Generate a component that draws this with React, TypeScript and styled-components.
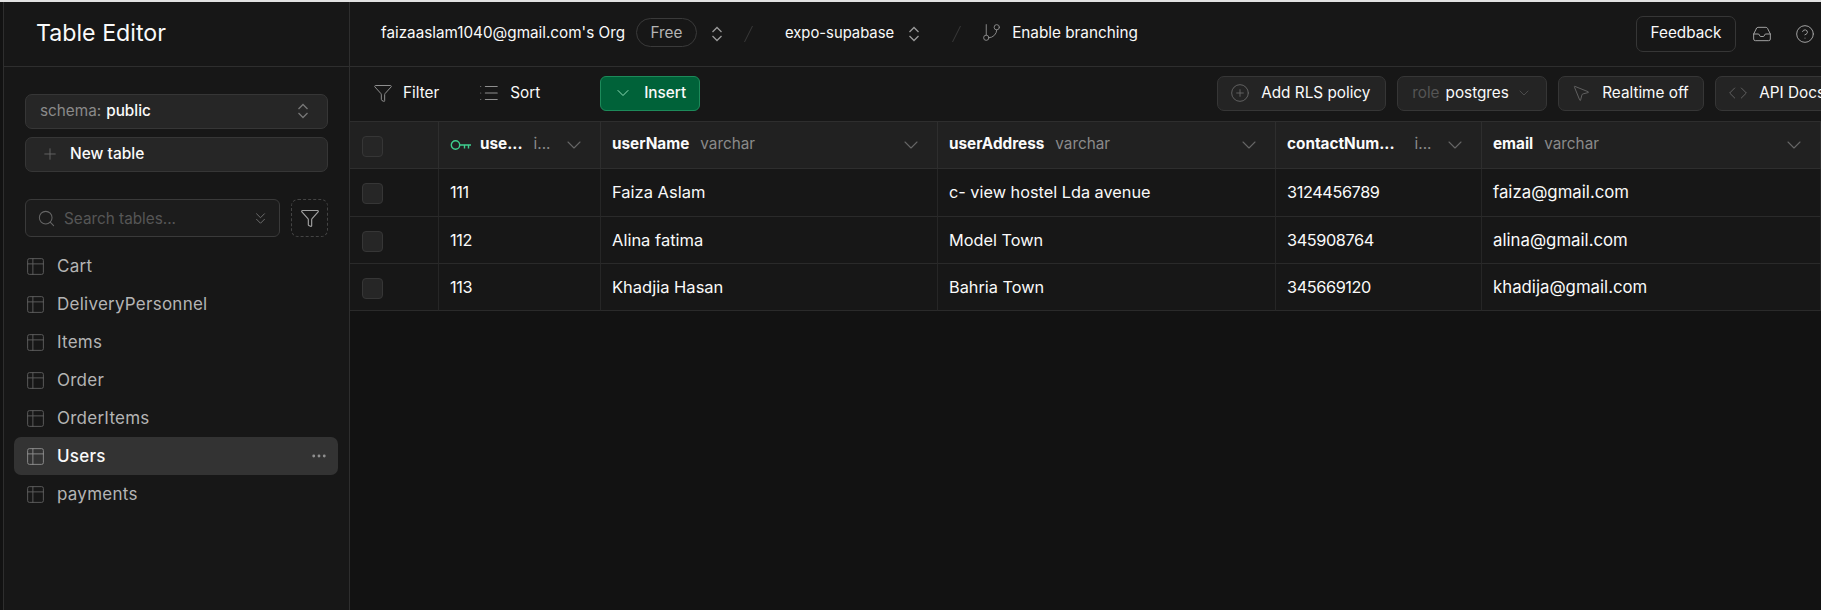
import React from "react";
import styled, { createGlobalStyle } from "styled-components";
import {
  ChevronDown,
  ChevronsDown,
  CircleHelp,
  CirclePlus,
  Code,
  Filter as FilterIcon,
  GitBranch,
  Inbox,
  List,
  MoreHorizontal,
  MousePointer2,
  Plus,
  Search,
  Table2,
} from "lucide-react";

const GlobalStyle = createGlobalStyle`
  html, body {
    margin: 0;
    padding: 0;
    background: #121212;
  }
  * {
    box-sizing: border-box;
  }
`;

const tables = ["Cart", "DeliveryPersonnel", "Items", "Order", "OrderItems", "Users", "payments"];

const rows = [
  ["111", "Faiza Aslam", "c- view hostel Lda avenue", "3124456789", "faiza@gmail.com"],
  ["112", "Alina fatima", "Model Town", "345908764", "alina@gmail.com"],
  ["113", "Khadjia Hasan", "Bahria Town", "345669120", "khadija@gmail.com"],
];

// the columns do not all run the same width in the shot
const cellSizes = [16.3, 16.5, 16.3, 16.3, 16.8];

const UpDown = ({ color = "#9a9a9a" }: { color?: string }) => (
  <svg width="12" height="16" viewBox="0 0 12 16" fill="none" stroke={color} strokeWidth="1.3">
    <path d="M1.5 6l4.5-4.5L10.500 6M1.500 10l4.500 4.500 4.500-4.500" />
  </svg>
);

const KeyGlyph = () => (
  <svg width="22" height="12" viewBox="0 0 22 12" fill="none" stroke="#3ecf8e" strokeWidth="1.4">
    <circle cx="5.5" cy="6" r="4.2" />
    <path d="M9.7 6H21M14.500 6v3.500M18.500 6v3.500" />
  </svg>
);

const SlashGlyph = () => (
  <svg width="9" height="16" viewBox="0 0 9 16" fill="none" stroke="#3a3a3a" strokeWidth="1">
    <path d="M8.500 0L.500 16" />
  </svg>
);

const App = () => {
  return (
    <Page>
      <GlobalStyle />
      <TopStrip />
      <Body>
        <Sidebar>
          <SideHead>Table Editor</SideHead>
          <SideContent>
            <SchemaButton>
              <Muted>schema:</Muted>
              <strong>public</strong>
              <PushRight>
                <UpDown color="#777" />
              </PushRight>
            </SchemaButton>
            <NewTable>
              <Plus size={18} color="#666" strokeWidth={1.2} />
              New table
            </NewTable>
            <SearchRow>
              <SearchBox>
                <Search size={19} color="#666" strokeWidth={1.3} />
                <span>Search tables...</span>
                <PushRight>
                  <ChevronsDown size={19} color="#707070" strokeWidth={1.2} />
                </PushRight>
              </SearchBox>
              <DashedButton>
                <FilterIcon size={20} color="#a0a0a0" strokeWidth={1.4} />
              </DashedButton>
            </SearchRow>
          </SideContent>
          <TableList>
            {tables.map((name) => (
              <TableItem key={name} $active={name === "Users"}>
                <Table2 size={21} color={name === "Users" ? "#8a8a8a" : "#5c5c5c"} strokeWidth={1.1} />
                <TableName>{name}</TableName>
                {name === "Users" && (
                  <PushRight>
                    <MoreHorizontal size={18} color="#8f8f8f" strokeWidth={1.8} />
                  </PushRight>
                )}
              </TableItem>
            ))}
          </TableList>
        </Sidebar>
        <Main>
          <TopBar>
            <Crumb $size={15.25}>faizaaslam1040@gmail.com's Org</Crumb>
            <PlanPill>Free</PlanPill>
            <CrumbChevron>
              <UpDown />
            </CrumbChevron>
            <Slash $before={21} $after={32}>
              <SlashGlyph />
            </Slash>
            <Crumb $size={14.8}>expo-supabase</Crumb>
            <CrumbChevron>
              <UpDown />
            </CrumbChevron>
            <Slash $before={32} $after={20}>
              <SlashGlyph />
            </Slash>
            <BranchLink>
              <GitBranch size={21} color="#8a8a8a" strokeWidth={1.1} />
              Enable branching
            </BranchLink>
            <TopRight>
              <FeedbackButton>Feedback</FeedbackButton>
              <Inbox size={20} color="#a0a0a0" strokeWidth={1.2} />
              <HelpWrap>
                <CircleHelp size={20} color="#a0a0a0" strokeWidth={1.2} />
              </HelpWrap>
            </TopRight>
          </TopBar>
          <Toolbar>
            <ToolItem>
              <FilterIcon size={20} color="#8f8f8f" strokeWidth={1.2} />
              Filter
            </ToolItem>
            <ToolItem>
              <List size={22} color="#8f8f8f" strokeWidth={1.1} />
              Sort
            </ToolItem>
            <ToolDivider />
            <InsertButton>
              <ChevronDown size={20} color="#8fdcb6" strokeWidth={1.2} />
              Insert
            </InsertButton>
            <ToolRight>
              <ToolButton $width={169}>
                <CirclePlus size={20} color="#666" strokeWidth={1.1} />
                Add RLS policy
              </ToolButton>
              <ToolButton $width={150} $pad={14}>
                <RoleLabel>role</RoleLabel>
                postgres
                <RoleChevron>
                  <ChevronDown size={16} color="#555" strokeWidth={1.2} />
                </RoleChevron>
              </ToolButton>
              <ToolButton $width={146}>
                <MousePointer2 size={20} color="#666" strokeWidth={1.1} />
                Realtime off
              </ToolButton>
              <ToolButton $width={150}>
                <Code size={20} color="#666" strokeWidth={1.1} />
                API Docs
              </ToolButton>
            </ToolRight>
          </Toolbar>
          <Grid>
            <HeadCell $pad={12}>
              <Check />
            </HeadCell>
            <HeadCell $gap={8}>
              <KeyGlyph />
              <ColName>use...</ColName>
              <ColType $shift={3}>i...</ColType>
              <CellChevron />
            </HeadCell>
            <HeadCell>
              <ColName>userName</ColName>
              <ColType>varchar</ColType>
              <CellChevron />
            </HeadCell>
            <HeadCell>
              <ColName>userAddress</ColName>
              <ColType>varchar</ColType>
              <CellChevron />
            </HeadCell>
            <HeadCell>
              <ColName>contactNum...</ColName>
              <ColType $shift={9}>i...</ColType>
              <CellChevron />
            </HeadCell>
            <HeadCell>
              <ColName>email</ColName>
              <ColType>varchar</ColType>
              <CellChevron />
            </HeadCell>
            {rows.map((row) => (
              <React.Fragment key={row[0]}>
                <Cell $size={16} $pad={12}>
                  <Check />
                </Cell>
                {row.map((value, i) => (
                  <Cell key={value} $size={cellSizes[i]} $tight={i === 0 || i === 3}>
                    {value}
                  </Cell>
                ))}
              </React.Fragment>
            ))}
          </Grid>
        </Main>
      </Body>
    </Page>
  );
};

export default App;

const CellChevron = () => (
  <PushRight>
    <ChevronDown size={24} color="#666" strokeWidth={1.1} />
  </PushRight>
);

const Page = styled.div`
  width: 1821px;
  height: 610px;
  overflow: hidden;
  display: flex;
  flex-direction: column;
  background: #121212;
  color: #fafafa;
  font-family: Inter, "Liberation Sans", sans-serif;
  font-size: 15.3px;
`;

const TopStrip = styled.div`
  height: 2px;
  flex: none;
  background: #e2e2e2;
`;

const Body = styled.div`
  flex: 1;
  display: flex;
  padding-left: 3px;
  min-height: 0;
`;

const Sidebar = styled.aside`
  width: 347px;
  flex: none;
  background: #171717;
  border-left: 1px solid #2e2e2e;
  border-right: 1px solid #2e2e2e;
`;

const SideHead = styled.div`
  height: 65px;
  display: flex;
  align-items: center;
  padding: 0 0 2px 32px;
  font-size: 23.2px;
  border-bottom: 1px solid #2e2e2e;
`;

const SideContent = styled.div`
  padding: 27px 21px 0;
  display: flex;
  flex-direction: column;
`;

const SchemaButton = styled.div`
  height: 35px;
  display: flex;
  align-items: center;
  gap: 5px;
  padding: 0 18px 2px 14px;
  background: #262626;
  border: 1px solid #363636;
  border-radius: 7px;

  strong {
    font-weight: 500;
  }
`;

const Muted = styled.span`
  color: #8a8a8a;
`;

const PushRight = styled.span`
  margin-left: auto;
  display: inline-flex;
  align-items: center;
`;

const NewTable = styled.div`
  height: 35px;
  margin-top: 8px;
  display: flex;
  align-items: center;
  gap: 11px;
  padding: 0 0 2px 15px;
  background: #262626;
  border: 1px solid #363636;
  border-radius: 7px;
  font-size: 15.5px;
  font-weight: 500;
`;

const SearchRow = styled.div`
  margin-top: 27px;
  display: flex;
  gap: 11px;
`;

const SearchBox = styled.div`
  width: 255px;
  height: 38px;
  display: flex;
  align-items: center;
  gap: 8px;
  padding: 0 9px 0 11px;
  background: #1c1c1c;
  border: 1px solid #3a3a3a;
  border-radius: 6px;
  color: #565656;
`;

const DashedButton = styled.div`
  width: 37px;
  height: 38px;
  display: flex;
  align-items: center;
  justify-content: center;
  border: 1px dashed #444;
  border-radius: 7px;
`;

const TableList = styled.div`
  margin: 10px 11px 0 10px;
`;

const TableItem = styled.div<{ $active?: boolean }>`
  height: 38px;
  display: flex;
  align-items: center;
  gap: 11px;
  padding: 0 10px 0 11px;
  border-radius: 7px;
  font-weight: ${(p) => (p.$active ? 500 : 400)};
  color: ${(p) => (p.$active ? "#fafafa" : "#b4b4b4")};
  background: ${(p) => (p.$active ? "#333333" : "transparent")};
`;

const TableName = styled.span`
  font-size: 17px;
  letter-spacing: 0.25px;
`;

const Main = styled.main`
  flex: 1;
  min-width: 0;
  display: flex;
  flex-direction: column;
  background: #121212;
`;

const TopBar = styled.header`
  height: 65px;
  flex: none;
  display: flex;
  align-items: center;
  padding: 0 0 1px 31px;
  background: #171717;
  border-bottom: 1px solid #2e2e2e;
`;

const Crumb = styled.span<{ $size?: number }>`
  font-size: ${(p) => p.$size ?? 15.3}px;
  white-space: nowrap;
  margin-bottom: 2px;
`;

const PlanPill = styled.span`
  width: 61px;
  height: 29px;
  margin: 0 0 2px 11px;
  display: flex;
  align-items: center;
  justify-content: center;
  border: 1px solid #3a3a3a;
  border-radius: 15px;
  color: #b4b4b4;
`;

const CrumbChevron = styled.span`
  margin-left: 14px;
  display: inline-flex;
`;

const Slash = styled.span<{ $before: number; $after: number }>`
  margin: 0 ${(p) => p.$after}px 0 ${(p) => p.$before}px;
  display: inline-flex;
`;

const BranchLink = styled.span`
  display: flex;
  align-items: center;
  gap: 10px;
  margin-bottom: 2px;
`;

const TopRight = styled.div`
  margin-left: auto;
  display: flex;
  align-items: center;
  gap: 16px;
  padding-right: 6px;
`;

const HelpWrap = styled.span`
  margin-left: 7px;
  display: inline-flex;
`;

const FeedbackButton = styled.div`
  width: 100px;
  height: 36px;
  display: flex;
  align-items: center;
  justify-content: center;
  padding-bottom: 2px;
  border: 1px solid #363636;
  border-radius: 7px;
`;

const Toolbar = styled.div`
  height: 55px;
  flex: none;
  display: flex;
  align-items: center;
  padding: 0 0 1px 23px;
  background: #171717;
  border-bottom: 1px solid #2e2e2e;
  overflow: hidden;
`;

const ToolItem = styled.span`
  display: flex;
  align-items: center;
  gap: 10px;
  margin-right: 39px;
  padding-bottom: 2px;
  white-space: nowrap;
`;

const ToolDivider = styled.span`
  width: 1px;
  height: 27px;
  margin-left: -1px;
  background: #333;
`;

const InsertButton = styled.div`
  width: 100px;
  height: 35px;
  margin-left: 22px;
  flex: none;
  display: flex;
  align-items: center;
  gap: 11px;
  padding: 0 0 2px 12px;
  background: #006239;
  border: 1px solid #1d8a5a;
  border-radius: 6px;
  font-weight: 500;
`;

const ToolRight = styled.div`
  margin-left: 517px;
  flex: none;
  display: flex;
  gap: 11px;
`;

const ToolButton = styled.div<{ $width: number; $pad?: number }>`
  width: ${(p) => p.$width}px;
  height: 35px;
  flex: none;
  display: flex;
  align-items: center;
  gap: 11px;
  padding: 0 0 2px ${(p) => p.$pad ?? 12}px;
  background: #242424;
  border: 1px solid #363636;
  border-radius: 7px;
  white-space: nowrap;
`;

const RoleLabel = styled.span`
  color: #555;
  margin-right: -5px;
`;

const RoleChevron = styled.span`
  margin-left: -4px;
  display: inline-flex;
`;

const Grid = styled.div`
  display: grid;
  grid-template-columns: 89px 162px 337px 338px 206px 339px;
  grid-auto-rows: 47.25px;
`;

const HeadCell = styled.div<{ $gap?: number; $pad?: number }>`
  display: flex;
  align-items: center;
  gap: ${(p) => p.$gap ?? 11}px;
  padding: 0 14px 0 ${(p) => p.$pad ?? 11}px;
  background: #212121;
  border-right: 1px solid #2e2e2e;
  border-bottom: 1px solid #2e2e2e;
  min-width: 0;
`;

const Cell = styled.div<{ $size: number; $pad?: number; $tight?: boolean }>`
  display: flex;
  align-items: center;
  padding-left: ${(p) => p.$pad ?? 11}px;
  background: #171717;
  border-right: 1px solid #262626;
  border-bottom: 1px solid #2a2a2a;
  font-size: ${(p) => p.$size}px;
  letter-spacing: ${(p) => (p.$tight ? "-0.4px" : "0")};
  line-height: 22px;
`;

const ColName = styled.span`
  font-weight: 700;
  white-space: nowrap;
  margin-bottom: 3px;
`;

const ColType = styled.span<{ $shift?: number }>`
  color: #8a8a8a;
  white-space: nowrap;
  margin-bottom: 3px;
  margin-left: ${(p) => p.$shift ?? 0}px;
`;

const Check = styled.span`
  width: 21px;
  height: 21px;
  display: block;
  margin-top: 3px;
  background: #262626;
  border: 1px solid #363636;
  border-radius: 4px;
`;
